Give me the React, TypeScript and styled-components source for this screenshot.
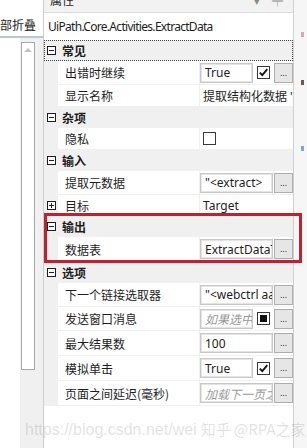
import React from 'react'
import styled, { createGlobalStyle } from 'styled-components'

const GlobalStyle = createGlobalStyle`
    body {
        margin: 0;
        background: #fff;
    }
`

const latin = `"Noto Sans", "Noto Sans CJK SC", sans-serif`
const cjk = `"Noto Sans CJK SC", "Noto Sans", sans-serif`

type Editor = {
    text: string
    placeholder?: boolean
    check?: 'on' | 'off' | 'mixed'
}

type Prop = {
    label: string
    height: number
    editor?: Editor
    plain?: string
    checkOnly?: boolean
    expander?: boolean
}

type Category = {
    name: string
    focused?: boolean
    props: Prop[]
}

const categories: Category[] = [
    {
        name: '常见',
        focused: true,
        props: [
            { label: '出错时继续', height: 24, editor: { text: 'True', check: 'on' } },
            { label: '显示名称', height: 22, plain: "提取结构化数据 'ExtractData'" },
        ],
    },
    {
        name: '杂项',
        props: [{ label: '隐私', height: 22, checkOnly: true }],
    },
    {
        name: '输入',
        props: [
            { label: '提取元数据', height: 24, editor: { text: '"<extract>' } },
            { label: '目标', height: 21, plain: 'Target', expander: true },
        ],
    },
    {
        name: '输出',
        props: [{ label: '数据表', height: 25, editor: { text: 'ExtractDataTable' } }],
    },
    {
        name: '选项',
        props: [
            { label: '下一个链接选取器', height: 24, editor: { text: '"<webctrl aaname=' } },
            { label: '发送窗口消息', height: 24, editor: { text: '如果选中此项', placeholder: true, check: 'mixed' } },
            { label: '最大结果数', height: 25, editor: { text: '100' } },
            { label: '模拟单击', height: 25, editor: { text: 'True', check: 'on' } },
            { label: '页面之间延迟(毫秒)', height: 25, editor: { text: '加载下一页之前', placeholder: true } },
        ],
    },
]

const Toggle = ({ open }: { open: boolean }) => (
    <ToggleBox>
        <svg width="9" height="9" viewBox="0 0 9 9">
            <rect x="0.5" y="0.5" width="8" height="8" fill="#fff" stroke="#1e1e1e" />
            <line x1="2" y1="4.5" x2="7" y2="4.5" stroke="#1e1e1e" />
            {!open && <line x1="4.5" y1="2" x2="4.5" y2="7" stroke="#1e1e1e" />}
        </svg>
    </ToggleBox>
)

const CheckGlyph = ({ state }: { state: 'on' | 'off' | 'mixed' }) => (
    <CheckBox>
        {state === 'on' && (
            <svg width="11" height="11" viewBox="0 0 11 11">
                <path d="M1.8 5.6 L4.3 8.2 L9.3 2.2" fill="none" stroke="#111" strokeWidth="1.8" />
            </svg>
        )}
        {state === 'mixed' && <MixedDot />}
    </CheckBox>
)

const EditorCell = ({ editor }: { editor: Editor }) => (
    <>
        <TextBox $placeholder={editor.placeholder}>{editor.text}</TextBox>
        {editor.check && (
            <CheckSlot>
                <CheckGlyph state={editor.check} />
            </CheckSlot>
        )}
        <DotsButton>...</DotsButton>
    </>
)

const App = () => {
    return (
        <Root>
            <GlobalStyle />

            <LeftPane>
                <LeftTop />
                <FoldTab>部折叠</FoldTab>
                <LeftBody>
                    <LeftBlank />
                    <ScrollColumn>
                        <ScrollBox>
                            <UpArrow />
                        </ScrollBox>
                    </ScrollColumn>
                </LeftBody>
            </LeftPane>

            <Main>
                <PanelHeader>
                    <HeaderTitle>属性</HeaderTitle>
                    <HeaderIcons>
                        <span>▾</span>
                        <span>╤</span>
                    </HeaderIcons>
                </PanelHeader>
                <TypeTitle>UiPath.Core.Activities.ExtractData</TypeTitle>

                <Grid>
                    {categories.map(cat => (
                        <React.Fragment key={cat.name}>
                            <CategoryRow $focused={cat.focused}>
                                <Toggle open />
                                <CategoryName>{cat.name}</CategoryName>
                            </CategoryRow>
                            {cat.props.map(p => (
                                <PropRow key={p.label} $height={p.height}>
                                    <MarginCell>{p.expander && <Toggle open={false} />}</MarginCell>
                                    <LabelCell>{p.label}</LabelCell>
                                    <ValueCell>
                                        {p.editor && <EditorCell editor={p.editor} />}
                                        {p.plain && <PlainValue>{p.plain}</PlainValue>}
                                        {p.checkOnly && (
                                            <PlainValue>
                                                <CheckGlyph state="off" />
                                            </PlainValue>
                                        )}
                                    </ValueCell>
                                </PropRow>
                            ))}
                        </React.Fragment>
                    ))}
                </Grid>
                <Footer />
            </Main>

            <RightStrip>
                <Speck $top={32} $color="#d9a3b8" />
                <Speck $top={80} $color="#6a5a50" />
                <Speck $top={146} $color="#7fa6d6" />
            </RightStrip>

            <Highlight />
            <Watermark>
                https://blog.csdn.net/wei<WatermarkCjk>知乎 @RPA之家</WatermarkCjk>
            </Watermark>
        </Root>
    )
}

export default App

const Root = styled.div`
    position: relative;
    display: flex;
    width: 307px;
    height: 448px;
    overflow: hidden;
    background: #fff;
    font-family: ${cjk};
    font-size: 12px;
    color: #1e1e1e;
`

const LeftPane = styled.div`
    width: 43px;
    display: flex;
    flex-direction: column;
    border-right: 1px solid #cdcdcd;
`
const LeftTop = styled.div`
    height: 12px;
    flex: none;
`
const FoldTab = styled.div`
    height: 24px;
    flex: none;
    display: flex;
    align-items: center;
    white-space: nowrap;
    font-size: 12px;
    border-bottom: 2px solid #b9c7d8;
`
const LeftBody = styled.div`
    flex: 1;
    display: flex;
`
const LeftBlank = styled.div`
    width: 20px;
    background: #fff;
`
const ScrollColumn = styled.div`
    flex: 1;
    background: #f0f0f0;
    padding: 4px 8px 0 1px;
`
const ScrollBox = styled.div`
    height: 328px;
    background: #fff;
    border: 1px solid #a8a8a8;
    display: flex;
    justify-content: center;
    padding-top: 5px;
    box-sizing: border-box;
`
const UpArrow = styled.div`
    width: 0;
    height: 0;
    border-left: 4px solid transparent;
    border-right: 4px solid transparent;
    border-bottom: 4px solid #c2c2c2;
`

const Main = styled.div`
    width: 249px;
    display: flex;
    flex-direction: column;
`
const PanelHeader = styled.div`
    height: 12px;
    flex: none;
    display: flex;
    justify-content: space-between;
    background: #f2f2f2;
    border-bottom: 1px solid #dcdcdc;
    overflow: hidden;
`
const HeaderTitle = styled.div`
    margin: -8px 0 0 6px;
    font-size: 12px;
    line-height: 16px;
`
const HeaderIcons = styled.div`
    display: flex;
    gap: 12px;
    margin: -8px 10px 0 0;
    font-size: 11px;
    line-height: 16px;
    color: #8a8a8a;
`
const TypeTitle = styled.div`
    height: 27px;
    flex: none;
    display: flex;
    align-items: center;
    padding-left: 4px;
    font-family: ${latin};
    font-size: 12px;
    letter-spacing: -0.7px;
    white-space: nowrap;
`
const Grid = styled.div`
    display: flex;
    flex-direction: column;
`
const CategoryRow = styled.div<{ $focused?: boolean }>`
    height: 21px;
    display: flex;
    align-items: center;
    background: #f0f0f0;
    box-sizing: border-box;
    outline: ${p => (p.$focused ? '1px dotted #444' : 'none')};
    outline-offset: -1px;
`
const ToggleBox = styled.div`
    width: 9px;
    height: 9px;
    margin-left: 3px;
    display: flex;
`
const CategoryName = styled.div`
    margin-left: 6px;
    font-weight: bold;
`
const PropRow = styled.div<{ $height: number }>`
    height: ${p => p.$height}px;
    display: grid;
    grid-template-columns: 14px 141px 1fr;
    background: #f0f0f0;
`
const MarginCell = styled.div`
    display: flex;
    align-items: center;
`
const LabelCell = styled.div`
    background: #fff;
    margin-bottom: 1px;
    padding-left: 7px;
    display: flex;
    align-items: center;
    white-space: nowrap;
    overflow: hidden;
`
const ValueCell = styled.div`
    background: #fff;
    margin: 0 0 1px 1px;
    display: flex;
    align-items: center;
    min-width: 0;
`
const PlainValue = styled.div`
    padding-left: 3px;
    display: flex;
    align-items: center;
    white-space: nowrap;
    overflow: hidden;
    font-family: ${latin};
    font-size: 12px;
`
const TextBox = styled.div<{ $placeholder?: boolean }>`
    flex: 1;
    min-width: 0;
    height: 20px;
    box-sizing: border-box;
    border: 1px solid #c8c8c8;
    box-shadow: inset 0 0 0 1px #e4e4e4;
    padding-left: 4px;
    display: flex;
    align-items: center;
    white-space: nowrap;
    overflow: hidden;
    font-family: ${p => (p.$placeholder ? cjk : latin)};
    font-style: ${p => (p.$placeholder ? 'italic' : 'normal')};
    color: ${p => (p.$placeholder ? '#9a9a9a' : '#1e1e1e')};
    font-size: 12px;
`
const CheckSlot = styled.div`
    margin: 0 3px 0 4px;
    display: flex;
`
const CheckBox = styled.div`
    width: 13px;
    height: 13px;
    box-sizing: border-box;
    border: 1px solid #3a3a3a;
    background: #fff;
    display: flex;
    align-items: center;
    justify-content: center;
`
const MixedDot = styled.div`
    width: 7px;
    height: 7px;
    background: #111;
`
const DotsButton = styled.div`
    width: 19px;
    height: 20px;
    flex: none;
    margin-left: 1px;
    box-sizing: border-box;
    border: 1px solid #adadad;
    background: #e6e6e6;
    display: flex;
    align-items: flex-end;
    justify-content: center;
    padding-bottom: 5px;
    font-family: ${latin};
    font-size: 9px;
    line-height: 1;
    color: #333;
`
const Footer = styled.div`
    flex: 1;
    background: #fff;
`
const RightStrip = styled.div`
    position: relative;
    flex: 1;
    border-left: 1px solid #d0d0d0;
    background: #f6f6f6;
`
const Speck = styled.div<{ $top: number; $color: string }>`
    position: absolute;
    right: 3px;
    top: ${p => p.$top}px;
    width: 3px;
    height: 5px;
    background: ${p => p.$color};
`
const Highlight = styled.div`
    position: absolute;
    left: 44px;
    top: 213px;
    width: 258px;
    height: 50px;
    box-sizing: border-box;
    border: 3px solid #c3202f;
`
const Watermark = styled.div`
    position: absolute;
    left: 25px;
    top: 418px;
    font-family: "Liberation Sans", sans-serif;
    font-size: 16px;
    color: rgba(120, 120, 120, 0.22);
    white-space: nowrap;
`
const WatermarkCjk = styled.span`
    margin-left: 4px;
    font-family: ${cjk};
    font-size: 15px;
`
